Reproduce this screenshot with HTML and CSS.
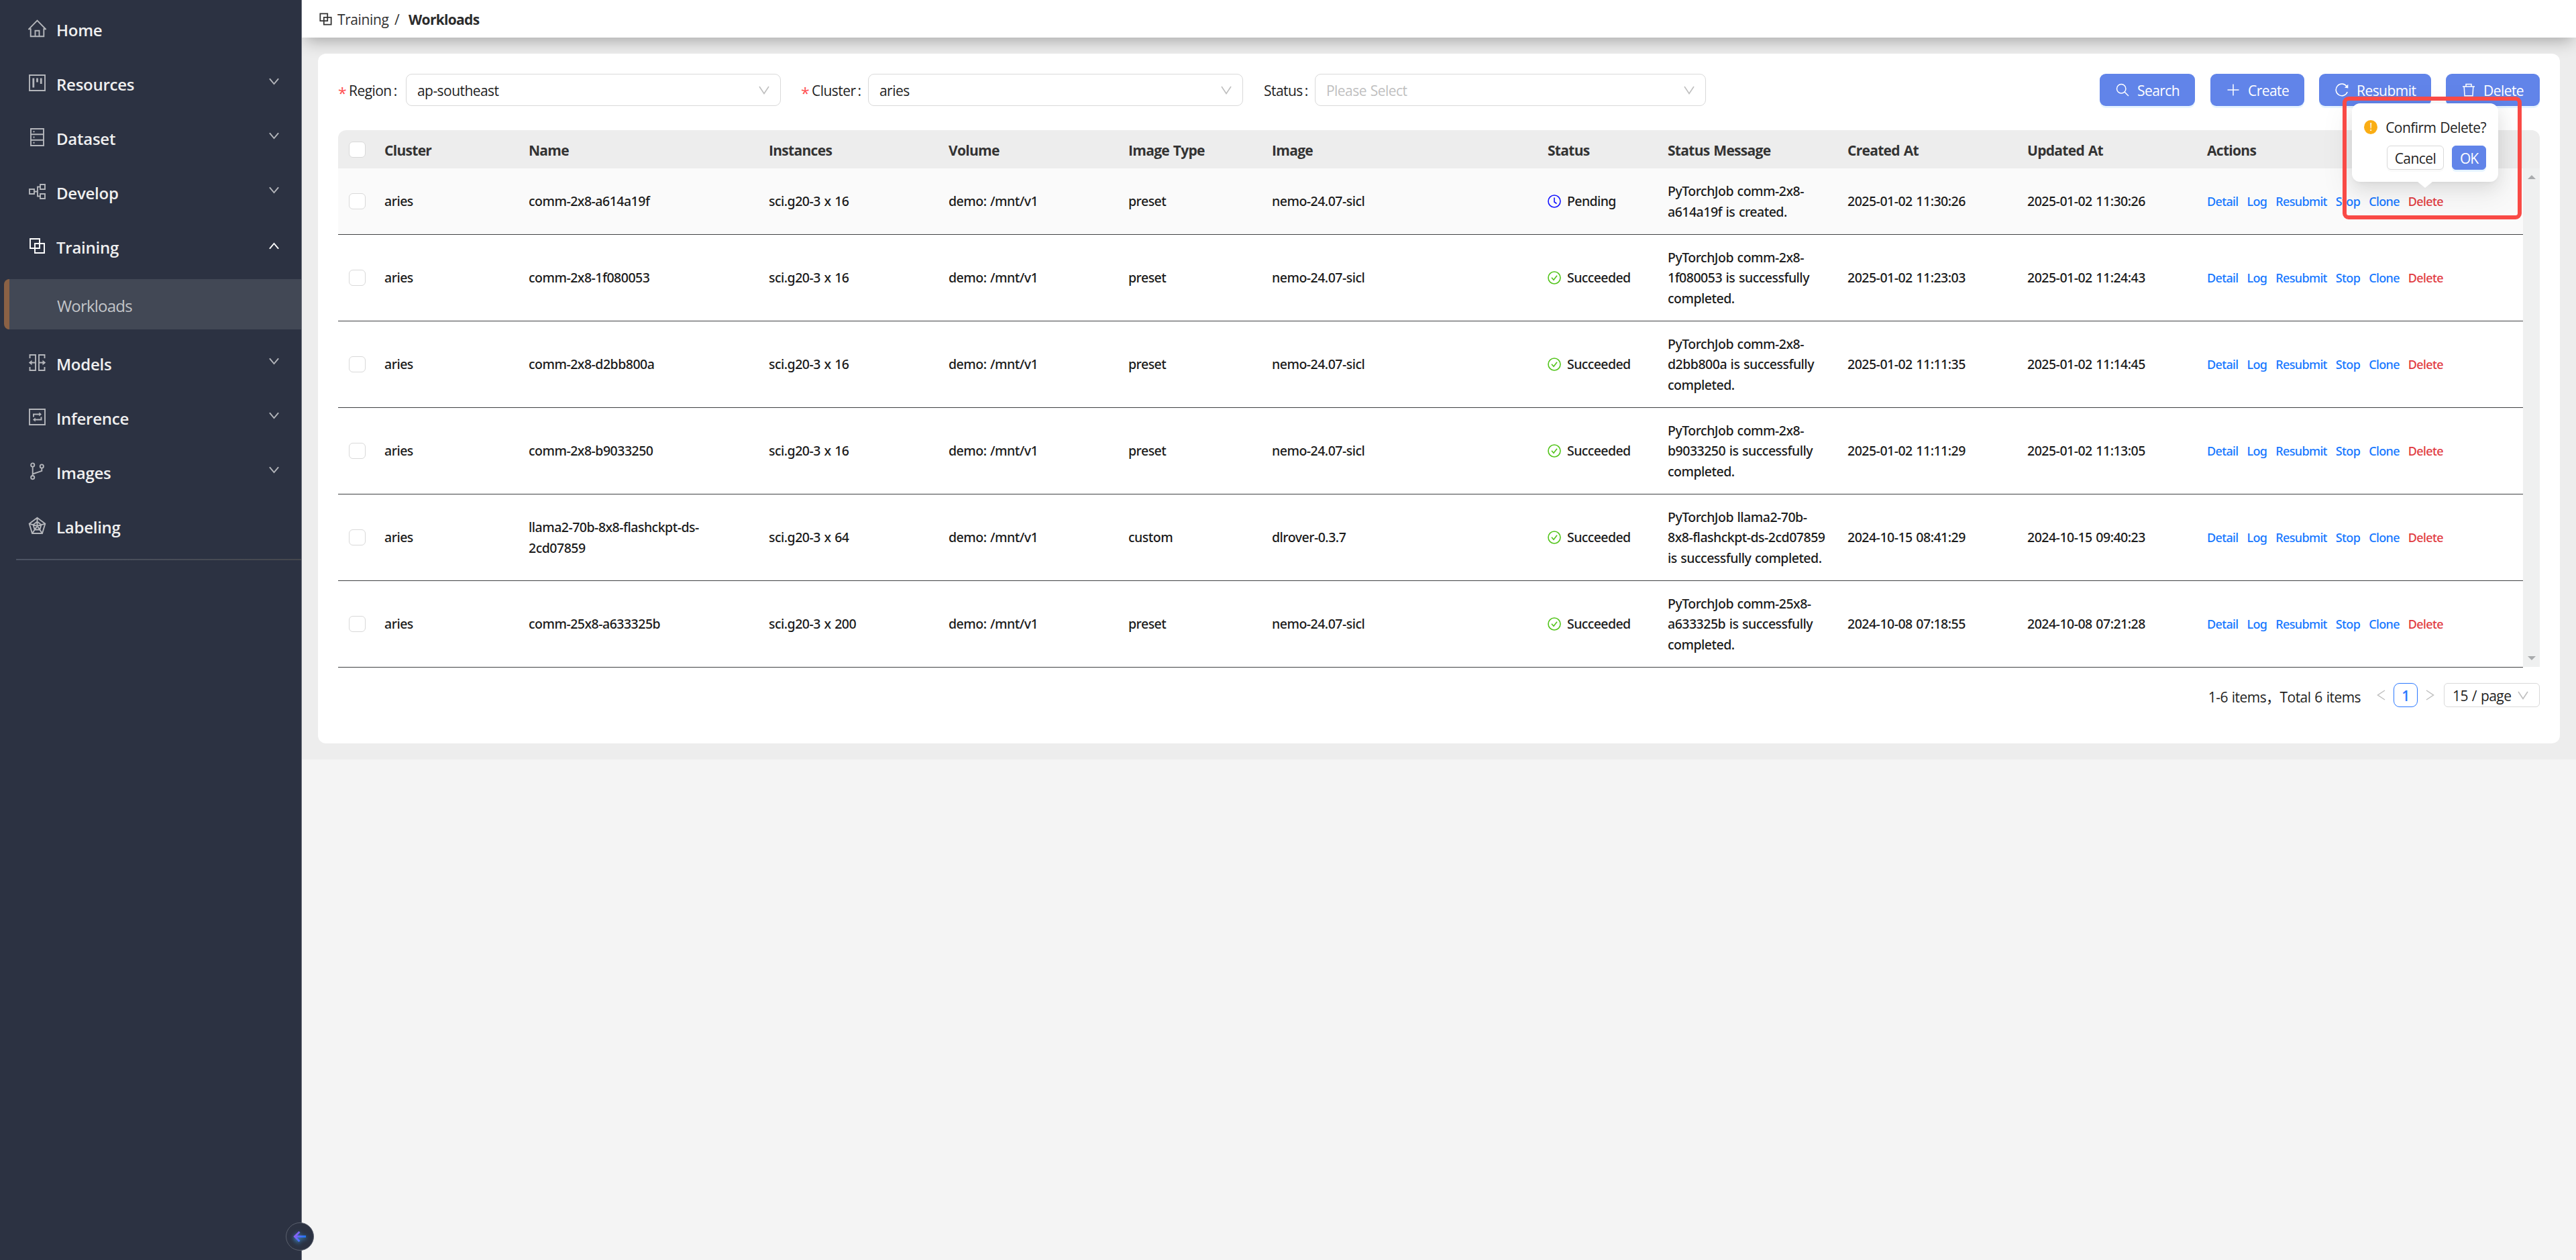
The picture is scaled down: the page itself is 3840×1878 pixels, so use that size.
FILE: index.html
```html
<!DOCTYPE html>
<html lang="en">
<head>
    <meta charset="utf-8" />
    <meta name="viewport" content="width=device-width, initial-scale=1.0">
    <title>Workloads</title>
    <link rel="stylesheet" href="styles.css">
</head>
<body>
    <svg class="sprite" xmlns="http://www.w3.org/2000/svg">
        <symbol id="i-home" viewBox="0 0 27 27"><path d="M1 14.3 13.5 1.5 26 14.3H23.3V25.3H3.7V14.3zM10.5 25.3V16.8H16.5V25.3" /></symbol>
        <symbol id="i-resources" viewBox="0 0 27 27"><path d="M2 2H25V25H2z" /><path class="bars" d="M7.8 6.5V20.5M13.5 6.5V12.5M19.2 6.5V15" /></symbol>
        <symbol id="i-dataset" viewBox="0 0 27 27"><path d="M4 1H23V26H4zM4 9.3H23M4 17.7H23M7.5 5.2H9.5M7.5 13.5H9.5M7.5 21.8H9.5" /></symbol>
        <symbol id="i-develop" viewBox="0 0 27 27"><path d="M2 10H9V17H2zM18 3H25V10H18zM18 17H25V24H18zM9 13.5H14M18 6.5H14V20.5H18" /></symbol>
        <symbol id="i-block" viewBox="0 0 27 27"><path d="M3 3H17V17H3zM10 10H24V24H10z" /></symbol>
        <symbol id="i-models" viewBox="0 0 27 27"><path d="M2.5 7V2H11V25H2.5V20M24.5 7V2H16V25H24.5V20M2 13.5H11M16 13.5H25" /><path class="solid" d="M.8 13.5 5.5 9.8V17.2zM26.2 13.5 21.5 9.8V17.2z" /></symbol>
        <symbol id="i-inference" viewBox="0 0 27 27"><path d="M2 2H25V25H2zM8 13.5V9.5H18.5M19.5 13.5V17.5H8.5" /><path class="solid" d="M20 9.5 16.3 6.5V12.5zM7 17.5 10.7 14.5V20.5z" /></symbol>
        <symbol id="i-images" viewBox="0 0 27 27"><circle cx="6.7" cy="4" r="2.6" /><circle cx="6.7" cy="22.6" r="2.6" /><circle cx="20.3" cy="6" r="2.6" /><path d="M6.7 6.6V20M20.3 8.6V12.8L6.7 17.5" /></symbol>
        <symbol id="i-labeling" viewBox="0 0 27 27"><path d="M13.5 1.8 25.3 10.6 21 25H6L1.7 10.6zM13.5 7.5 19.5 12 17.3 19.5H9.7L7.5 12zM13.5 2V14M1.7 10.6 13.5 14 25.3 10.6M6 25 13.5 14 21 25" /></symbol>
        <symbol id="i-down" viewBox="0 0 16 16"><path d="M1 3 8 13.5 15 3" /></symbol>
        <symbol id="i-search" viewBox="0 0 20 20"><circle cx="8.2" cy="8.2" r="6.7" /><path d="M13 13 19 19" /></symbol>
        <symbol id="i-plus" viewBox="0 0 20 20"><path d="M10 1.5V18.5M1.5 10H18.5" /></symbol>
        <symbol id="i-reload" viewBox="0 0 20 20"><path d="M18.2 13A8.8 8.8 0 1 1 17 4.5" /><path class="solid" d="M19.3 1.8V7.5L14 6.5z" /></symbol>
        <symbol id="i-trash" viewBox="0 0 20 20"><path d="M1 5H19M6 5V1.500H14V5M3.2 5 4 18.8H16L16.8 5" /></symbol>
        <symbol id="i-clock" viewBox="0 0 20 20"><circle cx="10" cy="10" r="9" /><path d="M10 4.5V11L13.5 13.5" /></symbol>
        <symbol id="i-check" viewBox="0 0 20 20"><circle cx="10" cy="10" r="9" /><path d="M6 9.8 9 13.3 14 6.8" /></symbol>
    </svg>

    <div class="app">
        <div class="sidebar">
            <div class="menu-item"><svg class="icon"><use href="#i-home" /></svg><span class="menu-label">Home</span></div>
            <div class="menu-item"><svg class="icon"><use href="#i-resources" /></svg><span class="menu-label">Resources</span><svg class="chevron"><use href="#i-down" /></svg></div>
            <div class="menu-item"><svg class="icon"><use href="#i-dataset" /></svg><span class="menu-label">Dataset</span><svg class="chevron"><use href="#i-down" /></svg></div>
            <div class="menu-item"><svg class="icon"><use href="#i-develop" /></svg><span class="menu-label">Develop</span><svg class="chevron"><use href="#i-down" /></svg></div>
            <div class="menu-item open"><svg class="icon"><use href="#i-block" /></svg><span class="menu-label">Training</span><svg class="chevron"><use href="#i-down" /></svg></div>
            <div class="submenu-item">Workloads</div>
            <div class="menu-item"><svg class="icon"><use href="#i-models" /></svg><span class="menu-label">Models</span><svg class="chevron"><use href="#i-down" /></svg></div>
            <div class="menu-item"><svg class="icon"><use href="#i-inference" /></svg><span class="menu-label">Inference</span><svg class="chevron"><use href="#i-down" /></svg></div>
            <div class="menu-item"><svg class="icon"><use href="#i-images" /></svg><span class="menu-label">Images</span><svg class="chevron"><use href="#i-down" /></svg></div>
            <div class="menu-item"><svg class="icon"><use href="#i-labeling" /></svg><span class="menu-label">Labeling</span></div>
            <div class="menu-line"></div>
            <div class="collapse">
                <svg viewBox="0 0 22 20">
                    <defs><linearGradient id="arrow" gradientUnits="userSpaceOnUse" x1="0" y1="0" x2="22" y2="12"><stop offset="0.2" stop-color="#9a5cf0" /><stop offset="0.8" stop-color="#2478ff" /></linearGradient></defs>
                    <path d="M10 2 2.500 9.500 10 17M3 9.500H20" stroke="url(#arrow)" />
                </svg>
            </div>
        </div>

        <div class="main">
            <div class="topbar">
                <svg class="crumb-icon"><use href="#i-block" /></svg>
                <span class="crumb">Training</span>
                <span class="crumb-sep">/</span>
                <span class="crumb-current">Workloads</span>
            </div>

            <div class="content">
                <div class="card">
                    <div class="filters">
                        <div class="label region"><span class="star">*</span>Region<span class="colon">:</span></div>
                        <div class="select"><span>ap-southeast</span><svg><use href="#i-down" /></svg></div>
                        <div class="label cluster"><span class="star">*</span>Cluster<span class="colon">:</span></div>
                        <div class="select"><span>aries</span><svg><use href="#i-down" /></svg></div>
                        <div class="label status-label">Status<span class="colon">:</span></div>
                        <div class="select select-status"><span>Please Select</span><svg><use href="#i-down" /></svg></div>
                        <div class="buttons">
                            <button class="btn btn-search"><svg><use href="#i-search" /></svg><span>Search</span></button>
                            <button class="btn btn-create"><svg><use href="#i-plus" /></svg><span>Create</span></button>
                            <button class="btn btn-resubmit"><svg><use href="#i-reload" /></svg><span>Resubmit</span></button>
                            <button class="btn btn-delete"><svg><use href="#i-trash" /></svg><span>Delete</span></button>
                        </div>
                    </div>

                    <div class="table-head">
                        <table>
                            <tr>
                                <th class="c-check"><i class="checkbox"></i></th>
                                <th class="c-cluster">Cluster</th>
                                <th class="c-name">Name</th>
                                <th class="c-inst">Instances</th>
                                <th class="c-volume">Volume</th>
                                <th class="c-type">Image Type</th>
                                <th class="c-image">Image</th>
                                <th class="c-status">Status</th>
                                <th class="c-msg">Status Message</th>
                                <th class="c-created">Created At</th>
                                <th class="c-updated">Updated At</th>
                                <th class="c-actions">Actions</th>
                            </tr>
                        </table>
                    </div>
                    <div class="table-body">
                        <table>
                            <tr class="hover">
                                <td class="c-check"><i class="checkbox"></i></td>
                                <td class="c-cluster">aries</td>
                                <td class="c-name">comm-2x8-a614a19f</td>
                                <td class="c-inst">sci.g20-3 x 16</td>
                                <td class="c-volume">demo: /mnt/v1</td>
                                <td class="c-type">preset</td>
                                <td class="c-image">nemo-24.07-sicl</td>
                                <td class="c-status"><div class="status pending"><svg><use href="#i-clock" /></svg>Pending</div></td>
                                <td class="c-msg">PyTorchJob comm-2x8-a614a19f is created.</td>
                                <td class="c-created">2025-01-02 11:30:26</td>
                                <td class="c-updated">2025-01-02 11:30:26</td>
                                <td class="c-actions"><div class="links"><a>Detail</a><a>Log</a><a>Resubmit</a><a>Stop</a><a>Clone</a><a class="danger">Delete</a></div></td>
                            </tr>
                            <tr>
                                <td><i class="checkbox"></i></td>
                                <td>aries</td>
                                <td>comm-2x8-1f080053</td>
                                <td>sci.g20-3 x 16</td>
                                <td>demo: /mnt/v1</td>
                                <td>preset</td>
                                <td>nemo-24.07-sicl</td>
                                <td><div class="status"><svg><use href="#i-check" /></svg>Succeeded</div></td>
                                <td>PyTorchJob comm-2x8-1f080053 is successfully completed.</td>
                                <td>2025-01-02 11:23:03</td>
                                <td>2025-01-02 11:24:43</td>
                                <td><div class="links"><a>Detail</a><a>Log</a><a>Resubmit</a><a>Stop</a><a>Clone</a><a class="danger">Delete</a></div></td>
                            </tr>
                            <tr>
                                <td><i class="checkbox"></i></td>
                                <td>aries</td>
                                <td>comm-2x8-d2bb800a</td>
                                <td>sci.g20-3 x 16</td>
                                <td>demo: /mnt/v1</td>
                                <td>preset</td>
                                <td>nemo-24.07-sicl</td>
                                <td><div class="status"><svg><use href="#i-check" /></svg>Succeeded</div></td>
                                <td>PyTorchJob comm-2x8-d2bb800a is successfully completed.</td>
                                <td>2025-01-02 11:11:35</td>
                                <td>2025-01-02 11:14:45</td>
                                <td><div class="links"><a>Detail</a><a>Log</a><a>Resubmit</a><a>Stop</a><a>Clone</a><a class="danger">Delete</a></div></td>
                            </tr>
                            <tr>
                                <td><i class="checkbox"></i></td>
                                <td>aries</td>
                                <td>comm-2x8-b9033250</td>
                                <td>sci.g20-3 x 16</td>
                                <td>demo: /mnt/v1</td>
                                <td>preset</td>
                                <td>nemo-24.07-sicl</td>
                                <td><div class="status"><svg><use href="#i-check" /></svg>Succeeded</div></td>
                                <td>PyTorchJob comm-2x8-b9033250 is successfully completed.</td>
                                <td>2025-01-02 11:11:29</td>
                                <td>2025-01-02 11:13:05</td>
                                <td><div class="links"><a>Detail</a><a>Log</a><a>Resubmit</a><a>Stop</a><a>Clone</a><a class="danger">Delete</a></div></td>
                            </tr>
                            <tr>
                                <td><i class="checkbox"></i></td>
                                <td>aries</td>
                                <td>llama2-70b-8x8-flashckpt-ds-2cd07859</td>
                                <td>sci.g20-3 x 64</td>
                                <td>demo: /mnt/v1</td>
                                <td>custom</td>
                                <td>dlrover-0.3.7</td>
                                <td><div class="status"><svg><use href="#i-check" /></svg>Succeeded</div></td>
                                <td>PyTorchJob llama2-70b-<br>8x8-flashckpt-ds-2cd07859 is successfully completed.</td>
                                <td>2024-10-15 08:41:29</td>
                                <td>2024-10-15 09:40:23</td>
                                <td><div class="links"><a>Detail</a><a>Log</a><a>Resubmit</a><a>Stop</a><a>Clone</a><a class="danger">Delete</a></div></td>
                            </tr>
                            <tr>
                                <td><i class="checkbox"></i></td>
                                <td>aries</td>
                                <td>comm-25x8-a633325b</td>
                                <td>sci.g20-3 x 200</td>
                                <td>demo: /mnt/v1</td>
                                <td>preset</td>
                                <td>nemo-24.07-sicl</td>
                                <td><div class="status"><svg><use href="#i-check" /></svg>Succeeded</div></td>
                                <td>PyTorchJob comm-25x8-a633325b is successfully completed.</td>
                                <td>2024-10-08 07:18:55</td>
                                <td>2024-10-08 07:21:28</td>
                                <td><div class="links"><a>Detail</a><a>Log</a><a>Resubmit</a><a>Stop</a><a>Clone</a><a class="danger">Delete</a></div></td>
                            </tr>
                        </table>
                        <div class="scrollbar"><i class="scroll-up"></i><i class="scroll-down"></i></div>
                    </div>

                    <div class="pagination">
                        <span class="total">1-6 items，Total 6 items</span>
                        <svg class="prev"><use href="#i-down" /></svg>
                        <span class="page">1</span>
                        <svg class="next"><use href="#i-down" /></svg>
                        <div class="page-size"><span>15 / page</span><svg><use href="#i-down" /></svg></div>
                    </div>
                </div>
            </div>
        </div>
    </div>

    <div class="popconfirm">
        <div class="pop-title"><span class="warn">!</span>Confirm Delete?</div>
        <div class="pop-buttons">
            <button class="pop-cancel">Cancel</button>
            <button class="pop-ok">OK</button>
        </div>
    </div>
    <div class="highlight"></div>
</body>
</html>
```
FILE: styles.css
```css
* {
    box-sizing: border-box;
}
body {
    margin: 0;
    font-family: "Segoe UI", "Open Sans", "Noto Sans CJK SC", sans-serif;
    font-size: 21px;
    letter-spacing: -0.55px;
    word-spacing: 1px;
    color: #1f1f1f;
    background: #f4f4f4;
}
button {
    font: inherit;
    letter-spacing: inherit;
    padding: 0;
}
svg {
    fill: none;
    stroke: currentColor;
    flex: none;
}
.solid {
    fill: currentColor;
    stroke: none;
}
.bars {
    stroke-width: 2.8;
}
.sprite {
    display: none;
}
.app {
    display: flex;
    height: 1878px;
}

/* sidebar */
.sidebar {
    position: relative;
    z-index: 3;
    width: 450px;
    padding-top: 2px;
    background: #2c3242;
    border-right: 1px solid #6a6f7a;
}
.menu-item {
    display: flex;
    align-items: center;
    height: 81px;
    padding: 0 33px 0 42px;
    color: #b4b6bb;
}
.icon {
    width: 27px;
    height: 27px;
    stroke-width: 1.9;
}
.menu-label {
    flex: 1;
    margin-left: 15px;
    padding-top: 3px;
    font-size: 24px;
    font-weight: 600;
    letter-spacing: -0.25px;
    color: #f0f0f0;
}
.chevron {
    width: 15px;
    height: 15px;
    margin-bottom: 3px;
    stroke-width: 2.2;
}
.chevron use {
    transform: scaleY(0.8);
}
.open {
    color: #fff;
}
.open .chevron {
    transform: rotate(180deg);
}
.submenu-item {
    height: 75px;
    margin: 9px 0 9px 6px;
    padding: 3px 0 0 71px;
    line-height: 73px;
    font-size: 24px;
    letter-spacing: -0.8px;
    color: #c3c5c9;
    background: #424855;
    border-left: 8px solid #8a6145;
    border-radius: 8px 0 0 8px;
}
.menu-line {
    height: 2px;
    margin: 9px 0 0 24px;
    background: linear-gradient(90deg, #4c5363, #45474d);
}
.collapse {
    position: absolute;
    right: -19px;
    bottom: 14px;
    width: 42px;
    height: 42px;
    display: flex;
    align-items: center;
    justify-content: center;
    background: #2c3242;
    border: 1px solid #5a606d;
    border-radius: 50%;
}
.collapse svg {
    width: 21px;
    height: 19px;
    stroke-width: 3;
    filter: drop-shadow(0 2px 3px #3d9be0);
}

/* header */
.main {
    flex: 1;
    min-width: 0;
}
.topbar {
    position: relative;
    z-index: 1;
    display: flex;
    align-items: center;
    height: 56px;
    padding: 1px 0 0 24px;
    background: #fff;
    color: #333;
    box-shadow: 0 10px 24px -5px rgba(0, 0, 0, 0.3);
}
.crumb-icon {
    width: 23px;
    height: 21px;
    stroke-width: 2.3;
}
.crumb {
    margin-left: 6px;
    width: 72px;
    letter-spacing: -0.4px;
}
.crumb-sep {
    margin-left: 13px;
    width: 21px;
}
.crumb-current {
    font-weight: 700;
    letter-spacing: -0.7px;
    color: #2b2b2b;
}
.content {
    padding: 24px;
    background: #ededed;
}
.card {
    position: relative;
    z-index: 2;
    height: 1028px;
    padding: 30px;
    background: #fff;
    border-radius: 12px;
}

/* filters */
.filters {
    display: flex;
    align-items: center;
    height: 48px;
    margin-bottom: 36px;
}
.label {
    display: flex;
    align-items: center;
    height: 48px;
    padding-top: 2px;
}
.region {
    width: 101px;
}
.cluster {
    width: 100px;
    margin-left: 30px;
}
.status-label {
    width: 76px;
    margin-left: 31px;
}
.star {
    width: 16px;
    padding-top: 7px;
    font-size: 23px;
    color: #ff4d4f;
}
.colon {
    margin-left: 3px;
}
.select {
    display: flex;
    align-items: center;
    justify-content: space-between;
    width: 559px;
    height: 48px;
    padding: 2px 16px 0;
    border: 1px solid #d9d9d9;
    border-radius: 9px;
}
.select svg,
.page-size svg {
    width: 16px;
    height: 16px;
    margin-bottom: 3px;
    stroke-width: 1.6;
    color: #bfbfbf;
}
.select-status {
    width: 583px;
    color: #bfbfbf;
}
.buttons {
    display: flex;
    margin-left: auto;
}
.btn {
    display: flex;
    align-items: center;
    height: 48px;
    margin-left: 22px;
    padding: 2px 0 0 24px;
    color: #fff;
    background: #6184e9;
    border: none;
    border-radius: 9px;
    box-shadow: 0 3px 0 rgba(5, 145, 255, 0.1);
}
.btn svg {
    width: 20px;
    height: 20px;
    margin-right: 12px;
    margin-bottom: 3px;
    stroke-width: 1.5;
}
.btn-search {
    width: 142px;
}
.btn-create {
    width: 140px;
    margin-left: 23px;
}
.btn-resubmit {
    width: 167px;
}
.btn-delete {
    width: 140px;
}

/* table */
table {
    width: 3257px;
    table-layout: fixed;
    border-collapse: collapse;
}
.table-head {
    height: 57px;
    background: #ededed;
    border-radius: 12px 12px 0 0;
}
th {
    height: 57px;
    padding: 2px 12px 0;
    text-align: left;
    font-weight: 700;
    letter-spacing: -0.7px;
    color: #333;
}
.table-body {
    display: flex;
    height: 743px;
}
td {
    height: 129px;
    padding: 2px 12px 0;
    font-family: "Segoe UI", "Noto Sans", sans-serif;
    font-size: 19.5px;
    font-weight: 500;
    line-height: 30.6px;
    letter-spacing: -0.5px;
    color: #1a1a1a;
    border-bottom: 1px solid #3f4042;
}
.hover td {
    height: 98px;
    background: #fafafa;
}
.checkbox {
    display: block;
    width: 25px;
    height: 24px;
    margin: -2px 0 0 4px;
    background: #fff;
    border: 1px solid #d9d9d9;
    border-radius: 6px;
}
.c-check {
    width: 57px;
}
.c-cluster {
    width: 215px;
}
.c-name {
    width: 358px;
}
.c-inst,
.c-volume,
.c-msg,
.c-created,
.c-updated {
    width: 268px;
}
.c-type {
    width: 214px;
}
.c-image {
    width: 411px;
}
.c-status {
    width: 179px;
}
.c-actions {
    width: 483px;
}
.status {
    display: flex;
    align-items: center;
    letter-spacing: -0.6px;
}
.status svg {
    width: 20px;
    height: 20px;
    margin-right: 9px;
    margin-bottom: 2px;
    color: #52c41a;
    stroke-width: 1.6;
}
.pending svg {
    color: #1414ff;
}
.links {
    display: flex;
    gap: 13px;
    font-size: 18px;
    letter-spacing: -0.65px;
    color: #1677ff;
}
.links .danger {
    color: #e13a41;
}
.scrollbar {
    display: flex;
    flex-direction: column;
    align-items: center;
    justify-content: space-between;
    width: 25px;
    padding: 10px 0;
    background: #eff0f0;
}
.scroll-up,
.scroll-down {
    border: 6px solid transparent;
    border-top: none;
    border-bottom-color: #a9abad;
}
.scroll-down {
    transform: rotate(180deg);
}

/* pagination */
.pagination {
    display: flex;
    align-items: center;
    justify-content: flex-end;
    height: 36px;
    margin-top: 24px;
}
.total {
    padding-top: 3px;
}
.prev,
.next {
    width: 16px;
    height: 16px;
    color: #bfbfbf;
    stroke-width: 1.5;
    transform: rotate(90deg);
}
.prev {
    margin-left: 23px;
}
.next {
    margin-left: 10px;
    transform: rotate(-90deg);
}
.page {
    width: 36px;
    height: 36px;
    margin-left: 10px;
    line-height: 36px;
    text-align: center;
    font-weight: 600;
    color: #2a78ff;
    border: 1px solid #2a78ff;
    border-radius: 9px;
}
.page-size {
    display: flex;
    align-items: center;
    justify-content: space-between;
    width: 143px;
    height: 36px;
    margin-left: 13px;
    padding: 2px 16px 0 12px;
    border: 1px solid #d9d9d9;
    border-radius: 6px;
}

/* delete confirm */
.popconfirm {
    position: absolute;
    z-index: 5;
    left: 3506px;
    top: 154px;
    width: 218px;
    height: 117px;
    padding: 18px;
    background: #fff;
    border-radius: 12px;
    box-shadow: 0 9px 24px rgba(0, 0, 0, 0.08), 0 4px 9px -6px rgba(0, 0, 0, 0.12), 0 14px 42px 12px rgba(0, 0, 0, 0.05);
}
.popconfirm::after {
    content: "";
    position: absolute;
    left: 98px;
    top: 117px;
    border: 11px solid transparent;
    border-top: 9px solid #fff;
    border-bottom: none;
}
.pop-title {
    display: flex;
    align-items: center;
    height: 33px;
    padding-top: 2px;
    white-space: nowrap;
}
.warn {
    width: 21px;
    height: 21px;
    margin-right: 12px;
    line-height: 21px;
    text-align: center;
    font-size: 16px;
    color: #fff;
    background: #faad14;
    border-radius: 50%;
}
.pop-buttons {
    display: flex;
    justify-content: flex-end;
    gap: 12px;
    margin-top: 12px;
}
.pop-cancel,
.pop-ok {
    width: 85px;
    height: 36px;
    padding-top: 2px;
    color: #1f1f1f;
    background: #fff;
    border: 1px solid #d9d9d9;
    border-radius: 6px;
    box-shadow: 0 3px 0 rgba(0, 0, 0, 0.02);
}
.pop-ok {
    width: 51px;
    letter-spacing: -1px;
    color: #fff;
    background: #6184e9;
    border-color: #6184e9;
    box-shadow: 0 3px 0 rgba(5, 145, 255, 0.1);
}
.highlight {
    position: absolute;
    z-index: 6;
    left: 3492px;
    top: 144px;
    width: 267px;
    height: 183px;
    border: 6px solid #f94a46;
    border-radius: 9px;
}
```
